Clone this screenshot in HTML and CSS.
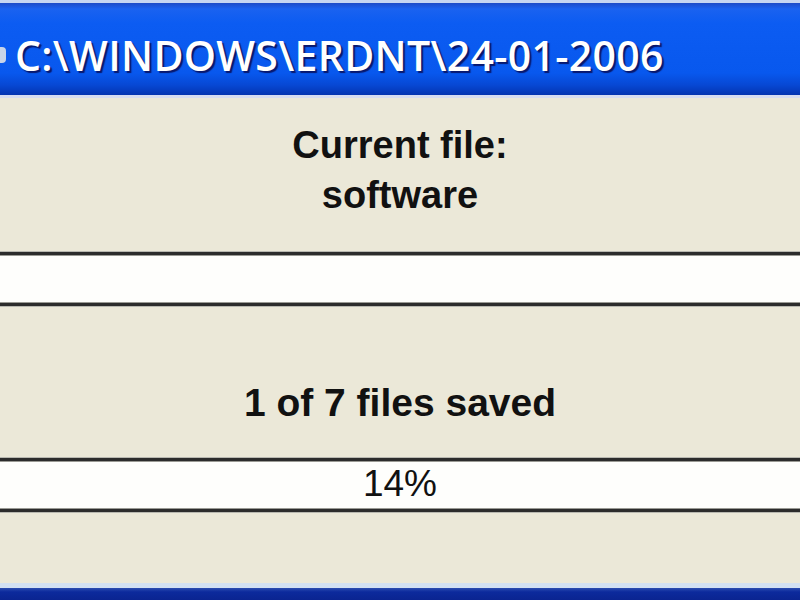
FILE: index.html
```html
<!DOCTYPE html>
<html lang="en">
<head>
    <meta charset="UTF-8">
    <meta name="viewport" content="width=device-width, initial-scale=1.0">
    <title>Saving files</title>
    <link rel="stylesheet" href="styles.css">
</head>
<body>
    <div class="window">
        <div class="titlebar">
            <span class="title-icon"></span>
            <span class="title-text">C:\WINDOWS\ERDNT\24-01-2006</span>
        </div>

        <div class="content">
            <div class="status">
                <div>Current file:</div>
                <div>software</div>
            </div>

            <div class="bar"></div>

            <div class="status count">1 of 7 files saved</div>

            <div class="bar percent">14%</div>
        </div>

        <div class="frame-bottom"></div>
    </div>
</body>
</html>
```

FILE: styles.css
```css
html, body {
    margin: 0;
    padding: 0;
    height: 100%;
    overflow: hidden;
}

body {
    background-color: #ebe8d8;
    font-family: "Liberation Sans", Arial, sans-serif;
}

.window {
    display: flex;
    flex-direction: column;
    height: 600px;
}

.titlebar {
    display: flex;
    align-items: center;
    height: 98px;
    padding-top: 12px;
    box-sizing: border-box;
    border-top: 3px solid #c6d6f2;
    border-bottom: 3px solid #d6dcf0;
    background: linear-gradient(to bottom,
        #1c4bc8 0px, #1a62f0 6px, #0c5cf2 20px, #0858ee 70px,
        #0748d4 82px, #0434b0 92px);
    color: #fff;
}

.title-icon {
    width: 10px;
    height: 16px;
    margin-left: -4px;
    margin-right: 9px;
    border-radius: 4px;
    background-color: #c8d4e8;
}

.title-text {
    font-family: "Open Sans", "DejaVu Sans", sans-serif;
    font-weight: 600;
    font-size: 41px;
    letter-spacing: 0.3px;
    text-shadow: 2px 2px 1px #08186e;
}

.content {
    flex: 1;
    display: flex;
    flex-direction: column;
}

.status {
    text-align: center;
    font-weight: bold;
    font-size: 38px;
    line-height: 50px;
    color: #111;
}

.status:first-child {
    margin-top: 22px;
}

.count {
    margin-top: 72px;
    font-size: 39px;
}

.bar {
    height: 48px;
    margin-top: 32px;
    background-color: #fefefc;
    border-top: 3px solid #2c2c2c;
    border-bottom: 3px solid #2c2c2c;
    box-shadow: 0 -1px 0 #b8b8b0, 0 1px 0 #b8b8b0,
        inset 0 1px 0 #9a9a94, inset 0 -1px 0 #9a9a94;
}

.percent {
    margin-top: 30px;
    text-align: center;
    font-size: 37px;
    line-height: 46px;
    color: #111;
}

.frame-bottom {
    height: 17px;
    border-top: 5px solid #d2e0f2;
    background: linear-gradient(to bottom, #2a4cb0 0px, #0c2a9c 4px, #0a2490 12px);
    box-sizing: border-box;
}
```
